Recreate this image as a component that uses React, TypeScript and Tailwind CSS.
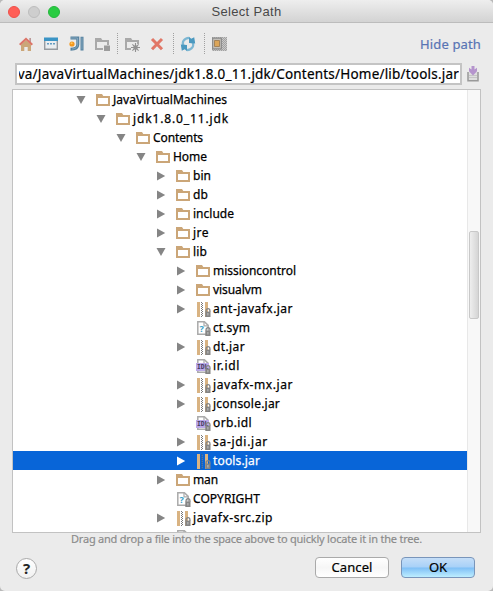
import { useLayoutEffect, useRef, useState, type ReactNode } from "react";

type Kind = "folder" | "archive" | "unknown" | "idl";
type Entry = {
  name: string;
  width: number;
  kind: Kind;
  indent: string;
  open?: boolean;
  leaf?: boolean;
  selected?: boolean;
};

const INDENT = ["pl-[63px]", "pl-[83px]", "pl-[103px]", "pl-[123px]", "pl-[143px]", "pl-[163px]"];

const entries: Entry[] = [
  { name: "JavaVirtualMachines", width: 114, kind: "folder", indent: INDENT[0], open: true },
  { name: "jdk1.8.0_11.jdk", width: 96, kind: "folder", indent: INDENT[1], open: true },
  { name: "Contents", width: 50, kind: "folder", indent: INDENT[2], open: true },
  { name: "Home", width: 34, kind: "folder", indent: INDENT[3], open: true },
  { name: "bin", width: 18, kind: "folder", indent: INDENT[4] },
  { name: "db", width: 15, kind: "folder", indent: INDENT[4] },
  { name: "include", width: 41, kind: "folder", indent: INDENT[4] },
  { name: "jre", width: 16, kind: "folder", indent: INDENT[4] },
  { name: "lib", width: 14, kind: "folder", indent: INDENT[4], open: true },
  { name: "missioncontrol", width: 83, kind: "folder", indent: INDENT[5] },
  { name: "visualvm", width: 49, kind: "folder", indent: INDENT[5] },
  { name: "ant-javafx.jar", width: 80, kind: "archive", indent: INDENT[5] },
  { name: "ct.sym", width: 37, kind: "unknown", indent: INDENT[5], leaf: true },
  { name: "dt.jar", width: 32, kind: "archive", indent: INDENT[5] },
  { name: "ir.idl", width: 27, kind: "idl", indent: INDENT[5], leaf: true },
  { name: "javafx-mx.jar", width: 80, kind: "archive", indent: INDENT[5] },
  { name: "jconsole.jar", width: 67, kind: "archive", indent: INDENT[5] },
  { name: "orb.idl", width: 39, kind: "idl", indent: INDENT[5], leaf: true },
  { name: "sa-jdi.jar", width: 55, kind: "archive", indent: INDENT[5] },
  { name: "tools.jar", width: 47, kind: "archive", indent: INDENT[5], selected: true },
  { name: "man", width: 25, kind: "folder", indent: INDENT[4] },
  { name: "COPYRIGHT", width: 67, kind: "unknown", indent: INDENT[4], leaf: true },
  { name: "javafx-src.zip", width: 80, kind: "archive", indent: INDENT[4] },
  { name: "LICENSE", width: 48, kind: "unknown", indent: INDENT[4], leaf: true },
];

/* Tracks its text so that the line takes exactly the given width. */
function FitText({ width, className = "", children }: { width: number; className?: string; children: string }) {
  const ref = useRef<HTMLSpanElement>(null);
  const [spacing, setSpacing] = useState(0);
  useLayoutEffect(() => {
    if (!ref.current) return;
    const natural = ref.current.getBoundingClientRect().width - spacing * children.length;
    const next = (width - natural) / children.length;
    if (Math.abs(next - spacing) > 0.005) setSpacing(next);
  }, [width, children, spacing]);
  return (
    <span ref={ref} className={`inline-block shrink-0 whitespace-pre ${className}`} style={{ letterSpacing: `${spacing}px` }}>
      {children}
    </span>
  );
}

function Icon({ children }: { children: ReactNode }) {
  return (
    <svg width="16" height="16" viewBox="0 0 16 16" className="block shrink-0">
      {children}
    </svg>
  );
}

function Lock() {
  return (
    <>
      <path d="M11.1 11V9.6a1.9 1.9 0 0 1 3.8 0V11" fill="none" stroke="#858585" strokeWidth="1.3" />
      <path d="M10.3 10.6h5.2V16h-5.2z" fill="#858585" />
      <path d="M12.4 12h1v2.4h-1z" fill="#c4c4c4" />
    </>
  );
}

function FileIcon({ kind, selected }: { kind: Kind; selected?: boolean }) {
  if (kind === "folder")
    return (
      <Icon>
        <path fillRule="evenodd" d="M1 2h6l1.3 2H15v10H1zM3 6v6h10V6z" fill="#cba678" />
      </Icon>
    );
  if (kind === "archive")
    return (
      <Icon>
        <path d="M2 1h3v15H2zM10 1h3v15h-3z" fill="#d9b382" />
        <path d="M6.5 1v15" stroke={selected ? "#4b5d78" : "#777"} strokeWidth="1" strokeDasharray="1 1" />
        <path d="M7.5 2v14" stroke={selected ? "#66788f" : "#777"} strokeWidth="1" strokeDasharray="1 1" />
        <Lock />
      </Icon>
    );
  return (
    <Icon>
      <path d="M2.8 14.2V1.8h6.6l3.8 3.6v8.8z" fill="#fff" stroke="#aaa" strokeWidth="1.5" />
      <path d="M9 2v3.8h4" fill="none" stroke="#aaa" strokeWidth="1.2" />
      {kind === "unknown" ? (
        <text x="4.5" y="12" fontSize="9" fontWeight="700" fontFamily="Noto Sans, sans-serif" fill="#38a0c8">?</text>
      ) : (
        <>
          <path d="M1 5h13v8H1z" fill="#bba8e8" />
          <text x="2" y="11.2" fontSize="6.3" fontWeight="700" fontFamily="Liberation Mono, monospace" fill="#40395e">IDL</text>
        </>
      )}
      <Lock />
    </Icon>
  );
}

function Arrow({ entry }: { entry: Entry }) {
  if (entry.leaf) return <span className="w-[10px] shrink-0" />;
  return (
    <svg width="10" height="10" viewBox="0 0 10 10" className="block shrink-0">
      <path d={entry.open ? "M.5 1h9L5 9z" : "M1 .5 9.2 5 1 9.5z"} fill={entry.selected ? "#fff" : "#858585"} />
    </svg>
  );
}

function Row({ entry }: { entry: Entry }) {
  return (
    <div className={`flex h-[19px] shrink-0 items-center ${entry.indent} ${entry.selected ? "bg-[#0865d8] text-white" : "text-black"}`}>
      <Arrow entry={entry} />
      <div className="ml-[9px] mr-[2px]">
        <FileIcon kind={entry.kind} selected={entry.selected} />
      </div>
      <FitText width={entry.width} className="text-[12px] leading-[19px] [-webkit-text-stroke:0.25px]">{entry.name}</FitText>
    </div>
  );
}

function Separator() {
  return <div className="h-[22px] w-px bg-[repeating-linear-gradient(#a0a0a0_0_1px,transparent_1px_2px)]" />;
}

function Toolbar() {
  return (
    <div className="flex h-[22px] items-center">
      <Icon>
        <path d="M3 8.5 8 4l5 4.5V15H9.7v-4H6.3v4H3z" fill="#cba678" />
        <path d="M11.3 2H13v4h-1.7z" fill="#b99" />
        <path d="m1.7 8.8 6.3-6 6.3 6" fill="none" stroke="#dc7468" strokeWidth="2" />
      </Icon>
      <div className="ml-[9px]">
        <Icon>
          <path d="M1.7 3v10.3h12.6V3" fill="#e9edf0" stroke="#969ba0" strokeWidth="1.4" />
          <path d="M1 1.5h14V5H1z" fill="#3a94c5" />
          <path d="M4 7h2v1.5H4zM7 7h2v1.5H7zM10 7h2v1.5h-2z" fill="#639bc0" />
        </Icon>
      </div>
      <div className="ml-[9px]">
        <Icon>
          <path d="M2.5 2h7.3v6.6c0 3-2.4 4.7-7.3 4.7" fill="none" stroke="#55819f" strokeWidth="3" />
          <path d="M3 2h6.6v6.6c0 2.4-2 4.2-5.6 4.5" fill="none" stroke="#8fb1c6" strokeWidth="0.8" />
          <path d="M14 .7v13.8" stroke="#55819f" strokeWidth="3" />
          <path d="M14 1.5v12" stroke="#8fb1c6" strokeWidth="0.8" />
          <circle cx="4" cy="8" r="2.6" fill="#f4981e" />
          <circle cx="3.6" cy="7.3" r="1" fill="#ffc861" />
        </Icon>
      </div>
      <div className="ml-[10px]">
        <Icon>
          <path fillRule="evenodd" d="M1 2h6l1.3 2H15v5h-2V6H3v6h6v2H1z" fill="#a9a9a9" />
          <path d="M10 9.5h6v5.5h-6z" fill="#9c9c9c" />
        </Icon>
      </div>
      <div className="ml-[7px]"><Separator /></div>
      <div className="ml-[6px]">
        <Icon>
          <path fillRule="evenodd" d="M1 2h6l1.3 2H15v4h-2V6H3v6h4v2H1z" fill="#a9a9a9" />
          <path d="M11.5 7v9M7 11.5h9M8.4 8.4l6.2 6.2m0-6.2-6.2 6.2" stroke="#929292" strokeWidth="1.1" />
          <circle cx="11.5" cy="11.5" r="2.3" fill="#929292" />
        </Icon>
      </div>
      <div className="ml-[9px]">
        <Icon>
          <path d="m3 3 10 10.3m0-10.3L3 13.3" stroke="#e17767" strokeWidth="3" />
        </Icon>
      </div>
      <div className="ml-[8px]"><Separator /></div>
      <div className="ml-[6px]">
        <Icon>
          <path d="M3.6 10.2C1.4 6 4 2.2 9 1.9" fill="none" stroke="#7db7d3" strokeWidth="2.2" />
          <path d="M12.4 5.8c2.2 4.2-.4 8-5.4 8.3" fill="none" stroke="#7db7d3" strokeWidth="2.2" />
          <path d="M.8 8.6 7 9v6.2l-2.2-2-3 1.6zM15.2 7.4 9 7V.8l2.2 2 3-1.6z" fill="#4b99c0" />
        </Icon>
      </div>
      <div className="ml-[8px]"><Separator /></div>
      <div className="ml-[6px]">
        <Icon>
          <path d="M1 1h15v14H1z" fill="#c9c9c9" />
          <path d="M1 1.5h15M1 3.5h15M1 5.5h15M1 7.5h15M1 9.5h15M1 11.5h15M1 13.5h15" stroke="#a2a2a2" strokeDasharray="1 1" />
          <path d="M2 2.5h15M2 4.5h15M2 6.5h15M2 8.5h15M2 10.5h15M2 12.5h15M2 14.5h15" stroke="#a2a2a2" strokeDasharray="1 1" />
          <path d="M1.6 2.1h8.8v10.8H1.6z" fill="#c4c0ba" stroke="#8d8d8d" strokeWidth="1.2" />
          <path d="M3.5 4.5h5v6h-5z" fill="#dca65a" stroke="#a5845a" />
        </Icon>
      </div>
      <FitText width={61} className="ml-auto text-[13px] leading-[22px] text-[#5874b4] [-webkit-text-stroke:0.2px]">Hide path</FitText>
    </div>
  );
}

export default function App() {
  return (
    <div className="h-[591px] w-[493px] overflow-hidden bg-[#b9b9b9] font-['Noto_Sans',sans-serif]">
      <div className="flex h-full flex-col overflow-hidden rounded-[5px] bg-[#ebebeb]">
        <header className="grid h-[23px] shrink-0 grid-cols-[1fr_auto_1fr] items-center border-b border-[#bcbcbc] bg-gradient-to-b from-[#eeeeee] to-[#d3d3d3]">
          <div className="flex gap-2 pl-2">
            <span className="size-[12px] rounded-full border border-[#ee514b] bg-[#ff5f57]" />
            <span className="size-[12px] rounded-full border border-[#bdbdbd] bg-[#cecece]" />
            <span className="size-[12px] rounded-full border border-[#24b73c] bg-[#29cc42]" />
          </div>
          <FitText width={70} className="pt-px font-['Liberation_Sans',sans-serif] text-[13px] leading-[22px] text-[#484848]">Select Path</FitText>
        </header>

        <div className="mt-[10px] shrink-0 pl-[18px] pr-[12px]">
          <Toolbar />
        </div>

        <div className="mt-[7px] flex h-[23px] shrink-0 items-center pl-[15px] pr-[12px]">
          <div className="flex h-[22px] w-[447px] items-center justify-end overflow-hidden border-2 border-[#c4c4c4] bg-white pl-[2px] pr-px text-black">
            <div className="flex min-w-0 flex-1 justify-end overflow-hidden">
              <FitText width={449} className="text-[13.5px] leading-[18px] [-webkit-text-stroke:0.2px]">ava/JavaVirtualMachines/jdk1.8.0_11.jdk/Contents/Home/lib/tools.jar</FitText>
            </div>
          </div>
          <div className="ml-[3px]">
            <Icon>
              <path d="M3 6v8.7h10V6" fill="#dedede" stroke="#999" strokeWidth="1.5" />
              <path d="M4 11.5h8M4 9.5h8" stroke="#c5c5c5" />
              <path d="M6.5 0h3v3.5L12 1.7v3.5L8 9.5 4 5.2V1.7l2.5 1.8z" fill="#b594cd" />
            </Icon>
          </div>
        </div>

        <main className="ml-[12px] mt-[4px] flex h-[444px] w-[469px] shrink-0 overflow-hidden border border-[#c2c2c2] bg-white">
          <div className="min-w-0 flex-1 overflow-hidden">
            {entries.map((entry) => <Row key={entry.name} entry={entry} />)}
          </div>
          <div className="w-[13px] shrink-0 border-l border-[#e8e8e8] bg-[#f8f8f8] pl-px pt-[141px]">
            <div className="h-[88px] w-[10px] rounded-[2px] border border-[#c8c8c8] bg-gradient-to-r from-[#eeeeee] to-[#d5d5d5]" />
          </div>
        </main>

        <div className="flex h-[14px] shrink-0 justify-center">
          <FitText width={351} className="text-[11px] leading-[12px] text-[#8a8a8a] [-webkit-text-stroke:0.15px]">Drag and drop a file into the space above to quickly locate it in the tree.</FitText>
        </div>

        <footer className="mt-[10px] flex h-[24px] shrink-0 items-start pl-[16px] pr-[18px]">
          <button className="mt-[1px] flex size-[21px] items-center justify-center rounded-full border border-[#aaa] bg-gradient-to-b from-white to-[#f1f1f1] text-[15px] font-bold leading-none text-[#252525]">?</button>
          <button className="ml-auto flex h-[21px] w-[74px] items-center justify-center rounded-[4px] border border-[#aaa] bg-gradient-to-b from-white via-[#f6f6f6] to-white text-black">
            <FitText width={41} className="text-[13px] leading-[19px] [-webkit-text-stroke:0.2px]">Cancel</FitText>
          </button>
          <button className="ml-[12px] flex h-[21px] w-[74px] items-center justify-center rounded-[4px] border border-[#7995ba] bg-[linear-gradient(#c5def8,#a8d1f8_48%,#7fbff6_52%,#bdeeff)] text-black">
            <FitText width={18} className="text-[13px] leading-[19px] [-webkit-text-stroke:0.2px]">OK</FitText>
          </button>
        </footer>
      </div>
    </div>
  );
}
